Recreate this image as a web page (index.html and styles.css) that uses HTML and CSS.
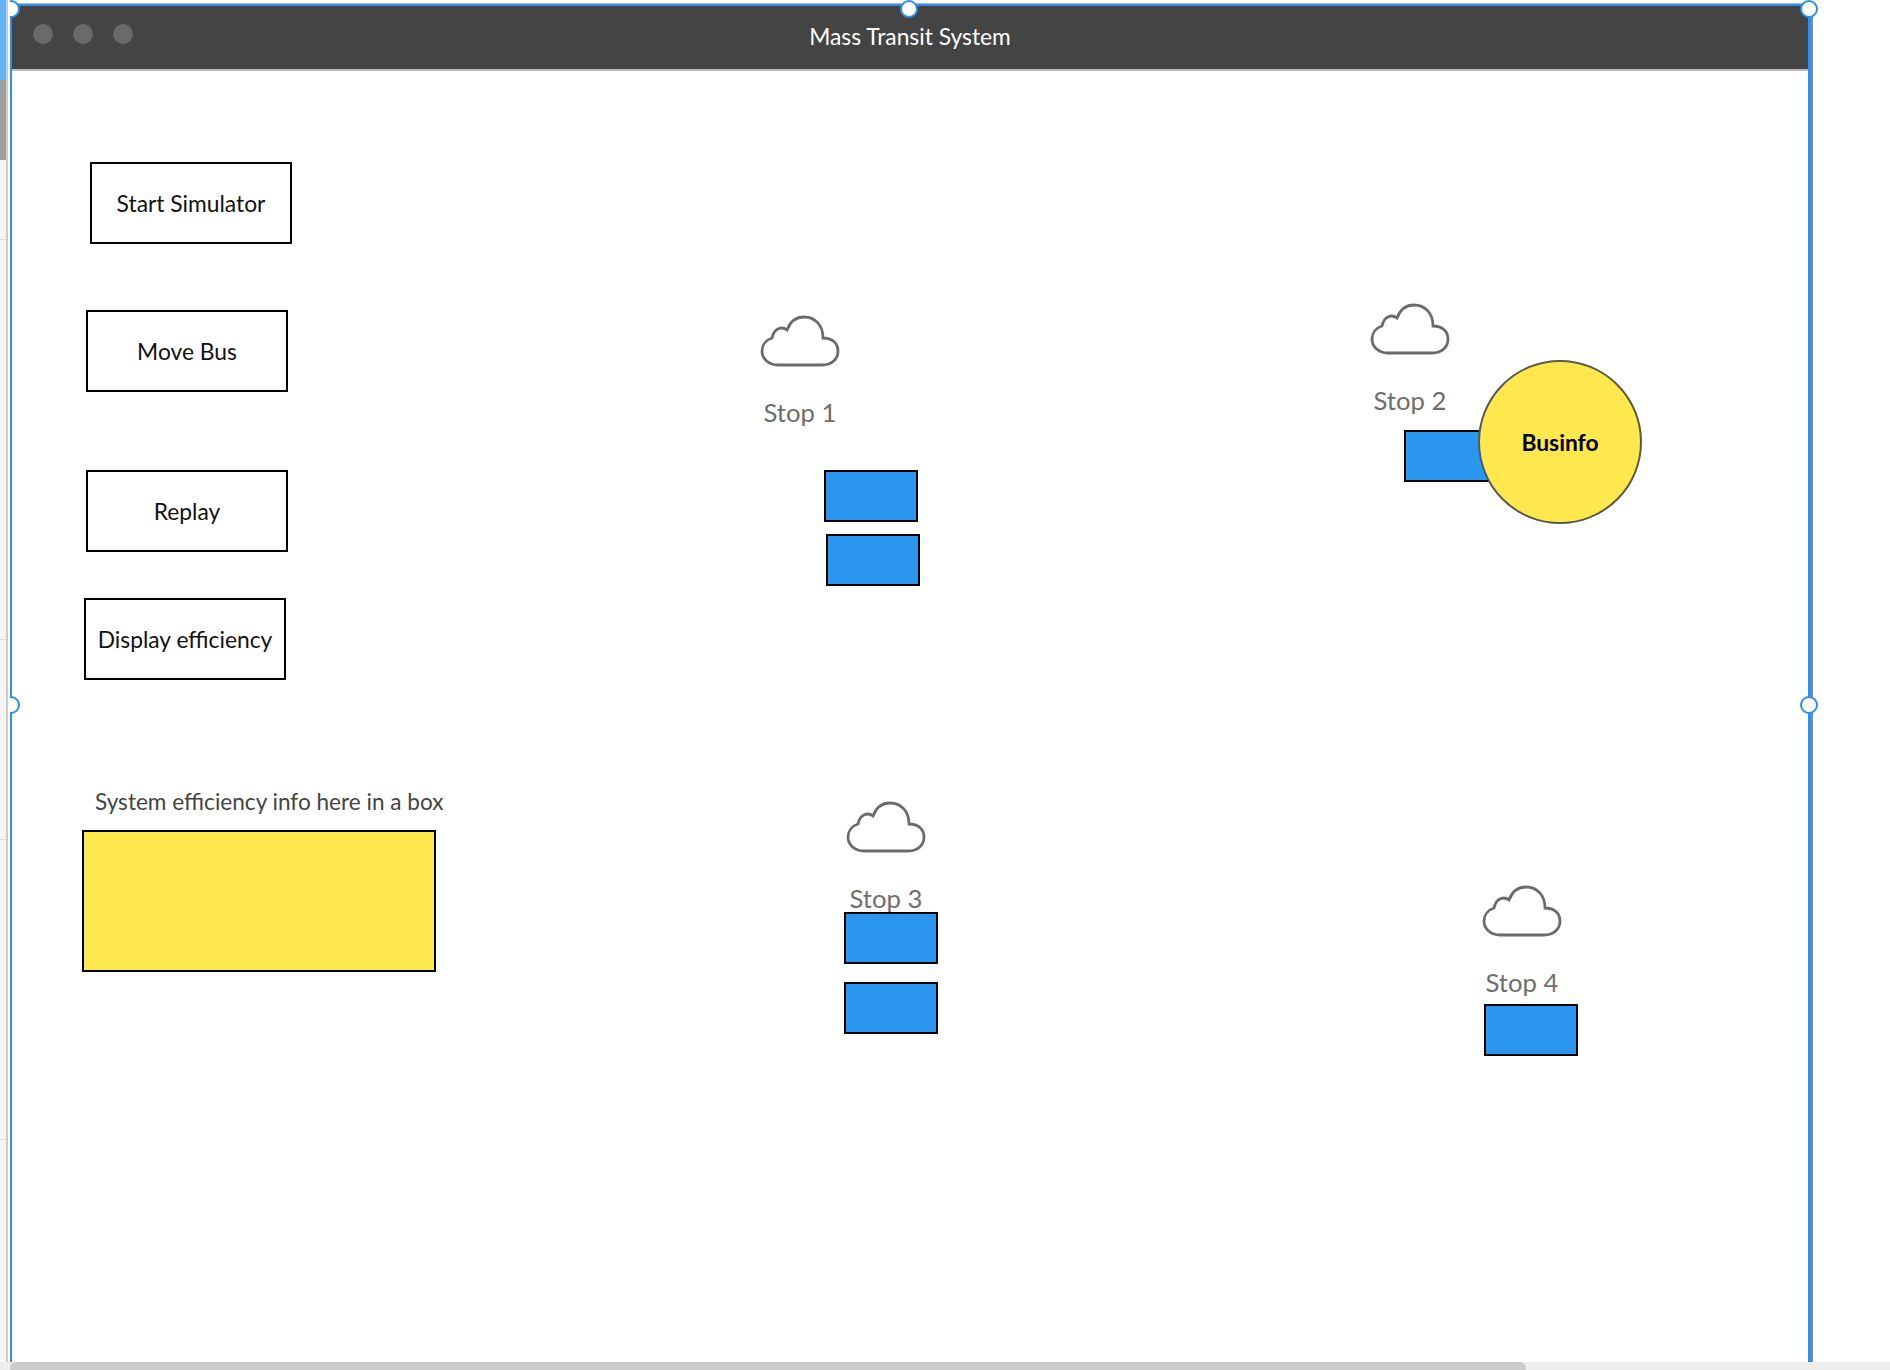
FILE: index.html
```html
<!DOCTYPE html>
<html lang="en">
<head>
    <meta charset="UTF-8">
    <meta name="viewport" content="width=device-width, initial-scale=1.0">
    <title>Mass Transit System</title>
    <link rel="stylesheet" href="styles.css">
</head>
<body>
    <svg class="defs" width="0" height="0">
        <symbol id="cloud" viewBox="0 0 80 52">
            <path d="M18 50 H62 C72 50 78 44 78 36 C78 28 72 23 63 23 C63 10 55 2 44 2 C36 2 30 7 27 15 C22 11 14 13 12 23 C6 25 2 30 2 36 C2 44 9 50 18 50 Z" />
        </symbol>
    </svg>

    <div class="workspace">
        <!-- Left ruler strip -->
        <div class="rail">
            <div class="rail-thumb"></div>
            <div class="rail-bar"></div>
            <div class="rail-tick tick1"></div>
            <div class="rail-tick tick2"></div>
            <div class="rail-tick tick3"></div>
            <div class="rail-tick tick4"></div>
        </div>

        <div class="window">
            <div class="titlebar">
                <div class="lights">
                    <span class="light"></span>
                    <span class="light"></span>
                    <span class="light"></span>
                </div>
                <span class="title">Mass Transit System</span>
            </div>

            <div class="canvas">
                <div class="btn btn-start">Start Simulator</div>
                <div class="btn btn-move">Move Bus</div>
                <div class="btn btn-replay">Replay</div>
                <div class="btn btn-display">Display efficiency</div>

                <span class="info-label">System efficiency info here in a box</span>
                <div class="info-box"></div>

                <div class="stop stop1">
                    <svg class="cloud"><use href="#cloud" /></svg>
                    <span class="stop-name">Stop 1</span>
                </div>
                <div class="stop stop2">
                    <svg class="cloud"><use href="#cloud" /></svg>
                    <span class="stop-name">Stop 2</span>
                </div>
                <div class="stop stop3">
                    <svg class="cloud"><use href="#cloud" /></svg>
                    <span class="stop-name">Stop 3</span>
                </div>
                <div class="stop stop4">
                    <svg class="cloud"><use href="#cloud" /></svg>
                    <span class="stop-name">Stop 4</span>
                </div>

                <div class="bus bus1"></div>
                <div class="bus bus2"></div>
                <div class="bus bus3"></div>
                <div class="bus bus4"></div>
                <div class="bus bus5"></div>
                <div class="bus bus6"></div>

                <div class="businfo">Businfo</div>
            </div>
        </div>
    </div>

    <div class="hscroll">
        <div class="hscroll-thumb"></div>
    </div>

    <!-- Selection handles sit over the window -->
    <div class="handles">
        <span class="handle handle-tl"></span>
        <span class="handle handle-tc"></span>
        <span class="handle handle-tr"></span>
        <span class="handle handle-ml"></span>
        <span class="handle handle-mr"></span>
    </div>
</body>
</html>
```

FILE: styles.css
```css
body {
    position: relative;
    display: flex;
    flex-direction: column;
    width: 1890px;
    height: 1370px;
    margin: 0;
    overflow: hidden;
    background-color: #fff;
    font-family: "Lato", "Noto Sans", sans-serif;
}

.defs {
    position: absolute;
}

.workspace {
    display: flex;
    flex: 1;
    min-height: 0;
}

.rail {
    position: relative;
    flex: none;
    width: 8px;
    margin-right: 2px;
    box-sizing: border-box;
    border-right: 2px solid #ccc;
    background-color: #f6f6f6;
}

.rail-thumb {
    height: 80px;
    background-color: #64b5f6;
}

.rail-bar {
    height: 80px;
    background-color: #a0a0a0;
}

.rail-tick {
    position: absolute;
    left: 0;
    width: 100%;
    height: 1px;
    background-color: #ddd;
}

.tick1 { top: 239px; }
.tick2 { top: 639px; }
.tick3 { top: 839px; }
.tick4 { top: 1139px; }

.window {
    display: flex;
    flex-direction: column;
    width: 1801px;
    margin-top: 4px;
    box-sizing: border-box;
    border-top: 2px solid #2b8ef0;
    border-left: 2px solid #2b8ef0;
    border-right: 3px solid #2b8ef0;
    box-shadow: 0 -1px 0 #bbb, 2px 0 0 #888;
}

.titlebar {
    position: relative;
    display: flex;
    flex: none;
    justify-content: center;
    align-items: center;
    height: 65px;
    padding-bottom: 4px;
    box-sizing: border-box;
    border-bottom: 2px solid #bbb;
    background-color: #444;
}

.lights {
    position: absolute;
    top: 18px;
    left: 21px;
    display: flex;
    gap: 20px;
}

.light {
    width: 20px;
    height: 20px;
    border-radius: 50%;
    background-color: #6a6a6a;
}

.title {
    font-size: 22.8px;
    color: #fff;
}

.canvas {
    position: relative;
    flex: 1;
}

/* canvas is offset by 12px, 71px from the page */
.btn {
    position: absolute;
    display: flex;
    justify-content: center;
    align-items: center;
    width: 202px;
    height: 82px;
    box-sizing: border-box;
    border: 2px solid #000;
    font-size: 22.8px;
    color: #111;
}

.btn-start { left: 78px; top: 91px; }
.btn-move { left: 74px; top: 239px; }
.btn-replay { left: 74px; top: 399px; }
.btn-display { left: 72px; top: 527px; }

.info-label {
    position: absolute;
    left: 83px;
    top: 717px;
    font-size: 22.6px;
    color: #444;
}

.info-box {
    position: absolute;
    left: 70px;
    top: 759px;
    width: 354px;
    height: 142px;
    box-sizing: border-box;
    border: 2px solid #000;
    background-color: #ffe84d;
}

.stop {
    position: absolute;
    display: flex;
    flex-direction: column;
    align-items: center;
    width: 80px;
}

.stop1 { left: 748px; top: 244px; }
.stop2 { left: 1358px; top: 232px; }
.stop3 { left: 834px; top: 730px; }
.stop4 { left: 1470px; top: 814px; }

.cloud {
    width: 80px;
    height: 52px;
    fill: none;
    stroke: #6b6b6b;
    stroke-width: 2.8;
}

.stop-name {
    margin-top: 29px;
    font-size: 25.7px;
    line-height: 32px;
    color: #6e6e6e;
}

.bus {
    position: absolute;
    width: 94px;
    height: 52px;
    box-sizing: border-box;
    border: 2px solid #000;
    background-color: #2b96ee;
}

.bus1 { left: 812px; top: 399px; }
.bus2 { left: 814px; top: 463px; }
.bus3 { left: 1392px; top: 359px; }
.bus4 { left: 832px; top: 841px; }
.bus5 { left: 832px; top: 911px; }
.bus6 { left: 1472px; top: 933px; }

.businfo {
    position: absolute;
    left: 1466px;
    top: 289px;
    display: flex;
    justify-content: center;
    align-items: center;
    width: 164px;
    height: 164px;
    box-sizing: border-box;
    border: 2px solid #5a5a4a;
    border-radius: 50%;
    background-color: #ffe84d;
    font-size: 22.8px;
    font-weight: 700;
    color: #000;
}

.hscroll {
    flex: none;
    height: 8px;
    background-color: #eee;
}

.hscroll-thumb {
    width: 1516px;
    height: 100%;
    margin-left: 10px;
    border-radius: 6px 6px 0 0;
    background-color: #ccc;
}

.handles {
    position: absolute;
    top: 0;
    left: 10px;
    right: 0;
    bottom: 8px;
    overflow: hidden;
}

.handle {
    position: absolute;
    width: 18px;
    height: 18px;
    box-sizing: border-box;
    border: 2px solid #2b8ef0;
    border-radius: 50%;
    background-color: #fff;
}

.handle-tl { left: -8px; top: 0; }
.handle-tc { left: 890px; top: 0; }
.handle-tr { left: 1790px; top: 0; }
.handle-ml { left: -8px; top: 696px; }
.handle-mr { left: 1790px; top: 696px; }
```
